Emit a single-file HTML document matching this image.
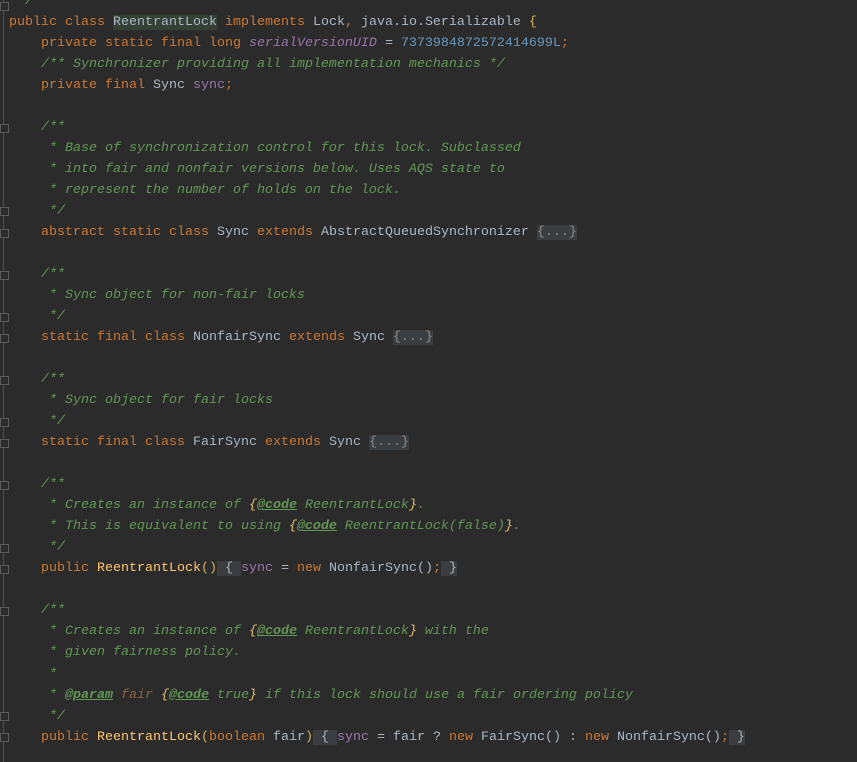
<!DOCTYPE html>
<html><head><meta charset="utf-8"><style>
html,body{margin:0;padding:0;background:#2b2b2b;width:857px;height:762px;overflow:hidden}
pre{position:absolute;left:9px;top:-9.5px;margin:0;font-family:"Liberation Mono",monospace;font-size:13.33px;line-height:21.03px;color:#a9b7c6;white-space:pre}
.k{color:#cc7832}.c{color:#629755;font-style:italic}.f{color:#9876aa}.fi{color:#9876aa;font-style:italic}.n{color:#6897bb}
.m{color:#ffc66d}.y{color:#e8bf6a;font-style:italic}.t{color:#629755;font-weight:bold;text-decoration:underline;font-style:italic}
.p{color:#8a653b;font-style:italic}
.fold{background:#3b3e40;color:#8c8c8c}.fb{background:#3b3e40}
.hl{background:#344134}
.g{position:absolute;left:3px;top:0;width:1px;height:762px;background:#4d4d4d}
.b{position:absolute;left:0;width:7px;height:7px;border:1px solid #5a5a5a;background:#2b2b2b}
</style></head><body>
<div class="g"></div>
<div class="b" style="top:2px"></div>
<div class="b" style="top:124px"></div><div class="b" style="top:207px"></div><div class="b" style="top:229px"></div>
<div class="b" style="top:271px"></div><div class="b" style="top:313px"></div><div class="b" style="top:334px"></div>
<div class="b" style="top:376px"></div><div class="b" style="top:418px"></div><div class="b" style="top:439px"></div>
<div class="b" style="top:481px"></div><div class="b" style="top:544px"></div><div class="b" style="top:565px"></div>
<div class="b" style="top:607px"></div><div class="b" style="top:712px"></div><div class="b" style="top:733px"></div>
<pre><span class="c"> */</span>
<span class="k">public class </span><span class="hl">ReentrantLock</span> <span class="k">implements </span>Lock<span class="k">, </span>java.io.Serializable <span style="color:#d8b35a">{</span>
    <span class="k">private static final long </span><span class="fi">serialVersionUID </span>= <span class="n">7373984872572414699L</span><span class="k">;</span>
    <span class="c">/** Synchronizer providing all implementation mechanics */</span>
    <span class="k">private final </span>Sync <span class="f">sync</span><span class="k">;</span>

    <span class="c">/**</span>
<span class="c">     * Base of synchronization control for this lock. Subclassed</span>
<span class="c">     * into fair and nonfair versions below. Uses AQS state to</span>
<span class="c">     * represent the number of holds on the lock.</span>
<span class="c">     */</span>
    <span class="k">abstract static class </span>Sync <span class="k">extends </span>AbstractQueuedSynchronizer <span class="fold">{...}</span>

    <span class="c">/**</span>
<span class="c">     * Sync object for non-fair locks</span>
<span class="c">     */</span>
    <span class="k">static final class </span>NonfairSync <span class="k">extends </span>Sync <span class="fold">{...}</span>

    <span class="c">/**</span>
<span class="c">     * Sync object for fair locks</span>
<span class="c">     */</span>
    <span class="k">static final class </span>FairSync <span class="k">extends </span>Sync <span class="fold">{...}</span>

    <span class="c">/**</span>
<span class="c">     * Creates an instance of </span><span class="y">{</span><span class="t">@code</span><span class="c"> ReentrantLock</span><span class="y">}</span><span class="c">.</span>
<span class="c">     * This is equivalent to using </span><span class="y">{</span><span class="t">@code</span><span class="c"> ReentrantLock(false)</span><span class="y">}</span><span class="c">.</span>
<span class="c">     */</span>
    <span class="k">public </span><span class="m">ReentrantLock</span><span style="color:#d8b35a">()</span><span class="fb"> { </span><span class="f">sync </span>= <span class="k">new </span>NonfairSync()<span class="k">;</span><span class="fb"> }</span>

    <span class="c">/**</span>
<span class="c">     * Creates an instance of </span><span class="y">{</span><span class="t">@code</span><span class="c"> ReentrantLock</span><span class="y">}</span><span class="c"> with the</span>
<span class="c">     * given fairness policy.</span>
<span class="c">     *</span>
<span class="c">     * </span><span class="t">@param</span> <span class="p">fair</span> <span class="y">{</span><span class="t">@code</span><span class="c"> true</span><span class="y">}</span><span class="c"> if this lock should use a fair ordering policy</span>
<span class="c">     */</span>
    <span class="k">public </span><span class="m">ReentrantLock</span><span style="color:#d8b35a">(</span><span class="k">boolean </span>fair<span style="color:#d8b35a">)</span><span class="fb"> { </span><span class="f">sync </span>= fair ? <span class="k">new </span>FairSync() : <span class="k">new </span>NonfairSync()<span class="k">;</span><span class="fb"> }</span>
</pre>
</body></html>
